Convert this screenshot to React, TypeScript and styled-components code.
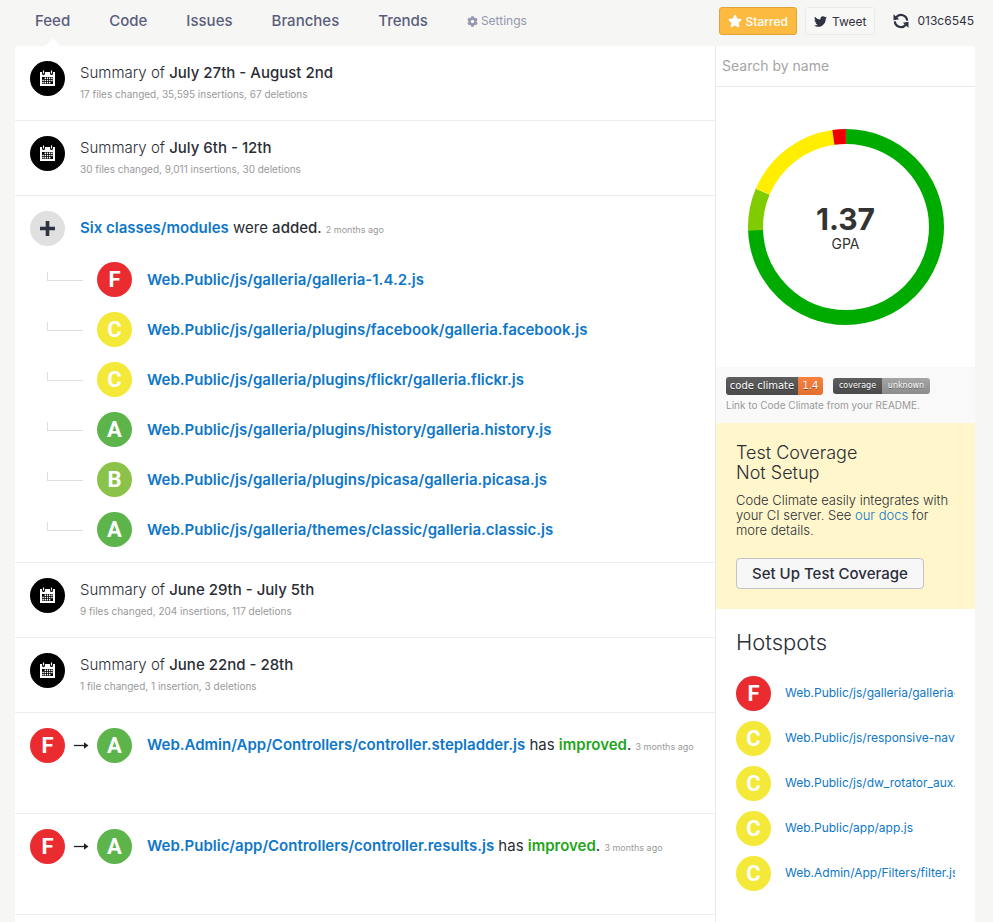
import React from 'react';
import styled, { createGlobalStyle } from 'styled-components';
import { FaCog, FaStar, FaTwitter } from 'react-icons/fa';

type Grade = 'A' | 'B' | 'C' | 'F';

const gradeColors: Record<Grade, string> = {
  A: '#5cb44b',
  B: '#8bc34a',
  C: '#f4e838',
  F: '#ea2c31',
};

const GlobalStyle = createGlobalStyle`
  *, *::before, *::after { box-sizing: border-box; }
  body {
    margin: 0;
    background: #f6f6f4;
    color: #2a2d34;
    font-family: Inter, "Noto Sans", sans-serif;
    font-size: 15px;
    line-height: 20px;
  }
  a { color: #0e77c9; text-decoration: none; }
  h2, p, ul { margin: 0; padding: 0; }
  ul { list-style: none; }
`;

const Page = styled.div`
  padding: 0 18px 0 15px;
`;

const TopBar = styled.header`
  display: flex;
  justify-content: space-between;
  height: 46px;
  padding-left: 20px;
`;

const Nav = styled.nav`
  display: flex;
  gap: 39px;
`;

const NavLink = styled.a<{ $active?: boolean }>`
  display: flex;
  flex-direction: column;
  align-items: center;
  justify-content: space-between;
  padding-top: 11px;
  color: #5a5d7c;
  font-weight: 500;

  &::after {
    content: '';
    border: 8px solid transparent;
    border-top: 0;
    border-bottom-color: ${({ $active }) => ($active ? '#fff' : 'transparent')};
  }
`;

const SettingsLink = styled.a`
  display: flex;
  align-items: center;
  gap: 3px;
  height: 20px;
  margin-top: 11px;
  color: #9496ad;
  font-size: 12px;
`;

const Actions = styled.div`
  display: flex;
  align-items: center;
  gap: 8px;
  height: 28px;
  margin-top: 7px;
`;

const ActionButton = styled.button<{ $starred?: boolean }>`
  display: flex;
  align-items: center;
  gap: ${({ $starred }) => ($starred ? 4 : 5)}px;
  height: 28px;
  padding: 0 8px;
  border: 1px solid ${({ $starred }) => ($starred ? '#e0a437' : '#ebebeb')};
  border-radius: 3px;
  background: ${({ $starred }) => ($starred ? '#fdba41' : '#f8f8f7')};
  color: ${({ $starred }) => ($starred ? '#fff' : '#2f3241')};
  font: ${({ $starred }) => ($starred ? 500 : 400)} 12px Inter, sans-serif;
  cursor: pointer;
`;

const Commit = styled.a`
  display: flex;
  align-items: center;
  gap: 8px;
  padding: 0 1px 0 10px;
  color: #2f3241;
  font-size: 12px;
`;

const Columns = styled.div`
  display: grid;
  grid-template-columns: minmax(0, 1fr) 260px;
  background: #fff;
  border-radius: 2px 2px 0 0;
`;

const Feed = styled.main`
  min-width: 0;
  padding-bottom: 7px;
`;

const Event = styled.article<{ $tall?: boolean }>`
  min-height: ${({ $tall }) => ($tall ? 101 : 75)}px;
  padding: 15px;
  border-bottom: 1px solid #ececec;
`;

const EventHead = styled.div`
  display: flex;
  align-items: center;
  gap: 15px;
`;

const SummaryHead = styled(EventHead)`
  align-items: flex-start;
`;

const SummaryText = styled.div`
  display: flex;
  flex-direction: column;
  gap: 1px;
  padding-top: 2px;
  font-weight: 300;
`;

const EventText = styled.p`
  min-width: 0;
  white-space: nowrap;
`;

const Medium = styled.strong`
  font-weight: 500;
`;

const Detail = styled.span`
  color: #999;
  font-size: 10px;
  font-weight: 400;
`;

const Time = styled.time`
  color: #999;
  font-size: 9px;
`;

const PathLink = styled.a`
  font-weight: 600;
`;

const Improved = styled.strong`
  color: #1fa51a;
  font-weight: 600;
`;

const Disc = styled.span<{ $color: string }>`
  display: grid;
  place-items: center;
  flex: none;
  width: 35px;
  height: 35px;
  border-radius: 50%;
  background: ${({ $color }) => $color};
  color: #fff;
  font: 700 22px/35px Roboto, sans-serif;
`;

const Transition = styled.div`
  display: flex;
  align-items: center;
  gap: 8px;
`;

const Children = styled.ul`
  display: flex;
  flex-direction: column;
  gap: 15px;
  padding: 16px 0 0 17px;
`;

const Child = styled.li`
  display: grid;
  grid-template-columns: 35px 35px minmax(0, 1fr);
  align-items: center;
  column-gap: 15px;
`;

const Branch = styled.span`
  align-self: start;
  width: 36px;
  height: 9px;
  margin-top: 10px;
  border-left: 1px solid #dedede;
  border-bottom: 1px solid #dedede;
`;

const Sidebar = styled.aside`
  align-self: start;
  min-width: 0;
  padding-bottom: 20px;
  border-left: 1px solid #e9e9e9;
`;

const Search = styled.input`
  display: block;
  width: 100%;
  height: 41px;
  padding: 0 6px 2px;
  border: 0;
  border-bottom: 1px solid #e9e9e9;
  background: transparent;
  font: 14px Inter, sans-serif;
  outline: 0;
  &::placeholder { color: #a5a5a5; }
`;

const ChartPanel = styled.section`
  display: grid;
  place-items: center;
  height: 280px;
  & > * { grid-area: 1 / 1; }
`;

const ChartLabel = styled.div`
  display: flex;
  flex-direction: column;
  align-items: center;
  padding-top: 2px;
  color: #333;
  font-size: 14px;
  line-height: 18px;
`;

const Gpa = styled.strong`
  font-size: 30px;
  line-height: 32px;
`;

const BadgePanel = styled.section`
  padding: 10px 10px 7px;
  background: #f9f9f9;
  color: #999;
  font-size: 10px;
  line-height: 21px;
`;

const Badges = styled.div`
  display: flex;
  align-items: center;
  gap: 10px;
`;

const Badge = styled.a<{ $small?: boolean }>`
  display: flex;
  width: 97px;
  overflow: hidden;
  border-radius: 3px;
  color: #fff;
  font-family: "DejaVu Sans", sans-serif;
  font-size: ${({ $small }) => ($small ? 8 : 10)}px;
  line-height: ${({ $small }) => ($small ? 16 : 18)}px;
  text-shadow: 0 1px 0 rgba(0, 0, 0, 0.4);
`;

const BadgePart = styled.span<{ $tone: 'dark' | 'orange' | 'grey' }>`
  flex: ${({ $tone }) => ($tone === 'orange' ? '0 0 25px' : $tone === 'grey' ? '0 0 48px' : '1')};
  text-align: center;
  white-space: nowrap;
  background: ${({ $tone }) =>
    $tone === 'dark'
      ? 'linear-gradient(#5e5e5e, #4a4a4a)'
      : $tone === 'orange'
        ? 'linear-gradient(#f9813f, #e2702f)'
        : 'linear-gradient(#a5a5a5, #8c8c8c)'};
`;

const CoveragePanel = styled.section`
  padding: 20px;
  border-radius: 2px;
  background: #fff6cb;
`;

const CoverageTitle = styled.h2`
  font-size: 18px;
  font-weight: 300;
  line-height: 20px;
`;

const CoverageText = styled.p`
  padding: 10px 0 20px;
  font-size: 13px;
  font-weight: 300;
  line-height: 15px;
`;

const SetupButton = styled.button`
  height: 31px;
  padding: 0 15px;
  border: 1px solid #bfc1cc;
  border-radius: 4px;
  background: #f7f7f7;
  color: #2a2d3a;
  font: 500 15px Inter, sans-serif;
  cursor: pointer;
`;

const Hotspots = styled.section`
  padding: 20px;
`;

const HotspotsTitle = styled.h2`
  font-size: 22px;
  font-weight: 300;
  line-height: 27px;
`;

const HotspotList = styled.ul`
  display: flex;
  flex-direction: column;
  gap: 10px;
  padding-top: 20px;
`;

const Hotspot = styled.li`
  display: flex;
  align-items: center;
  gap: 14px;
`;

const HotspotLink = styled.a`
  min-width: 0;
  padding-bottom: 2px;
  overflow: hidden;
  font-size: 12px;
  white-space: nowrap;
`;

const GradeDisc = ({ grade }: { grade: Grade }) => <Disc $color={gradeColors[grade]}>{grade}</Disc>;

const CalendarIcon = () => (
  <svg width="17" height="17" viewBox="0 0 17 17" aria-hidden="true">
    <path fill="#fff" d="M1 2h2v1.5a1.5 1.5 0 0 0 3 0V2h5v1.5a1.5 1.5 0 0 0 3 0V2h2v14H1z" />
    <path stroke="#fff" strokeWidth="1.2" d="M4.5 0.5v3M12.5 0.5v3" />
    <path fill="#000" d="M3 7h11v7h-11z" />
    <path stroke="#fff" strokeWidth="1.4" strokeDasharray="1.4 0.8" d="M5.600 8.300h8M3.400 10.500h10.500M3.400 12.700h8" />
  </svg>
);

const PlusIcon = () => (
  <svg width="15" height="15" viewBox="0 0 15 15" aria-hidden="true">
    <path stroke="#2f3241" strokeWidth="3.6" d="M7.5 0v15M0 7.5h15" />
  </svg>
);

const ArrowIcon = () => (
  <svg width="16" height="9" viewBox="0 0 16 9" aria-hidden="true">
    <path stroke="#222" strokeWidth="1.3" d="M1 4.5h12" />
    <path fill="#222" d="M11 1.3l4.500 3.200L11 7.700z" />
  </svg>
);

const SyncIcon = () => (
  <svg width="16" height="16" viewBox="0 0 16 16" fill="none" aria-hidden="true">
    <path stroke="#2f3241" strokeWidth="2.2" d="M3.2 4.2A6.2 6.2 0 0 1 14.2 7.6M12.8 11.8A6.2 6.2 0 0 1 1.8 8.4" />
    <path fill="#2f3241" d="M0.5 1.3v5.900l5.600-1zM15.5 14.7V8.800l-5.600 1z" />
  </svg>
);

const slices = [
  { from: 0, to: 268, color: '#00ab00' },
  { from: 268, to: 293, color: '#80cc00' },
  { from: 293, to: 352, color: '#ffee00' },
  { from: 352, to: 360, color: '#ee0000' },
];

const Donut = () => (
  <svg width="196" height="196" viewBox="0 0 196 196" role="img" aria-label="Grade breakdown">
    {slices.map(({ from, to, color }) => (
      <circle
        key={color}
        cx="98"
        cy="98"
        r="90.5"
        fill="none"
        stroke={color}
        strokeWidth="15"
        pathLength={360}
        strokeDasharray={`${to - from} 360`}
        transform={`rotate(${from - 90} 98 98)`}
      />
    ))}
  </svg>
);

const Summary = ({ period, detail }: { period: string; detail: string }) => (
  <Event>
    <SummaryHead>
      <Disc $color="#000"><CalendarIcon /></Disc>
      <SummaryText>
        <span>Summary of <Medium>{period}</Medium></span>
        <Detail>{detail}</Detail>
      </SummaryText>
    </SummaryHead>
  </Event>
);

const Improvement = ({ path }: { path: string }) => (
  <Event $tall>
    <EventHead>
      <Transition>
        <GradeDisc grade="F" />
        <ArrowIcon />
        <GradeDisc grade="A" />
      </Transition>
      <EventText>
        <PathLink href="#">{path}</PathLink> has <Improved>improved</Improved>. <Time>3 months ago</Time>
      </EventText>
    </EventHead>
  </Event>
);

const added: { grade: Grade; path: string }[] = [
  { grade: 'F', path: 'Web.Public/js/galleria/galleria-1.4.2.js' },
  { grade: 'C', path: 'Web.Public/js/galleria/plugins/facebook/galleria.facebook.js' },
  { grade: 'C', path: 'Web.Public/js/galleria/plugins/flickr/galleria.flickr.js' },
  { grade: 'A', path: 'Web.Public/js/galleria/plugins/history/galleria.history.js' },
  { grade: 'B', path: 'Web.Public/js/galleria/plugins/picasa/galleria.picasa.js' },
  { grade: 'A', path: 'Web.Public/js/galleria/themes/classic/galleria.classic.js' },
];

const hotspots: { grade: Grade; path: string }[] = [
  { grade: 'F', path: 'Web.Public/js/galleria/galleria-1.4.2.js' },
  { grade: 'C', path: 'Web.Public/js/responsive-nav.js' },
  { grade: 'C', path: 'Web.Public/js/dw_rotator_aux.js' },
  { grade: 'C', path: 'Web.Public/app/app.js' },
  { grade: 'C', path: 'Web.Admin/App/Filters/filter.js' },
];

export default function App() {
  return (
    <>
      <GlobalStyle />
      <Page>
        <TopBar>
          <Nav>
            <NavLink href="#" $active>Feed</NavLink>
            <NavLink href="#">Code</NavLink>
            <NavLink href="#">Issues</NavLink>
            <NavLink href="#">Branches</NavLink>
            <NavLink href="#">Trends</NavLink>
            <SettingsLink href="#"><FaCog size={11} />Settings</SettingsLink>
          </Nav>
          <Actions>
            <ActionButton type="button" $starred><FaStar size={14} />Starred</ActionButton>
            <ActionButton type="button"><FaTwitter size={13} />Tweet</ActionButton>
            <Commit href="#"><SyncIcon />013c6545</Commit>
          </Actions>
        </TopBar>
        <Columns>
          <Feed>
            <Summary period="July 27th - August 2nd" detail="17 files changed, 35,595 insertions, 67 deletions" />
            <Summary period="July 6th - 12th" detail="30 files changed, 9,011 insertions, 30 deletions" />
            <Event>
              <EventHead>
                <Disc $color="#e0e0e0"><PlusIcon /></Disc>
                <EventText>
                  <PathLink href="#">Six classes/modules</PathLink> were <Medium>added</Medium>. <Time>2 months ago</Time>
                </EventText>
              </EventHead>
              <Children>
                {added.map(({ grade, path }) => (
                  <Child key={path}>
                    <Branch />
                    <GradeDisc grade={grade} />
                    <PathLink href="#">{path}</PathLink>
                  </Child>
                ))}
              </Children>
            </Event>
            <Summary period="June 29th - July 5th" detail="9 files changed, 204 insertions, 117 deletions" />
            <Summary period="June 22nd - 28th" detail="1 file changed, 1 insertion, 3 deletions" />
            <Improvement path="Web.Admin/App/Controllers/controller.stepladder.js" />
            <Improvement path="Web.Public/app/Controllers/controller.results.js" />
          </Feed>
          <Sidebar>
            <Search type="search" placeholder="Search by name" aria-label="Search by name" />
            <ChartPanel>
              <Donut />
              <ChartLabel><Gpa>1.37</Gpa>GPA</ChartLabel>
            </ChartPanel>
            <BadgePanel>
              <Badges>
                <Badge href="#"><BadgePart $tone="dark">code climate</BadgePart><BadgePart $tone="orange">1.4</BadgePart></Badge>
                <Badge href="#" $small><BadgePart $tone="dark">coverage</BadgePart><BadgePart $tone="grey">unknown</BadgePart></Badge>
              </Badges>
              Link to Code Climate from your README.
            </BadgePanel>
            <CoveragePanel>
              <CoverageTitle>Test Coverage<br />Not Setup</CoverageTitle>
              <CoverageText>
                Code Climate easily integrates with your CI server. See <a href="#">our docs</a> for more details.
              </CoverageText>
              <SetupButton type="button">Set Up Test Coverage</SetupButton>
            </CoveragePanel>
            <Hotspots>
              <HotspotsTitle>Hotspots</HotspotsTitle>
              <HotspotList>
                {hotspots.map(({ grade, path }) => (
                  <Hotspot key={path}>
                    <GradeDisc grade={grade} />
                    <HotspotLink href="#">{path}</HotspotLink>
                  </Hotspot>
                ))}
              </HotspotList>
            </Hotspots>
          </Sidebar>
        </Columns>
      </Page>
    </>
  );
}
